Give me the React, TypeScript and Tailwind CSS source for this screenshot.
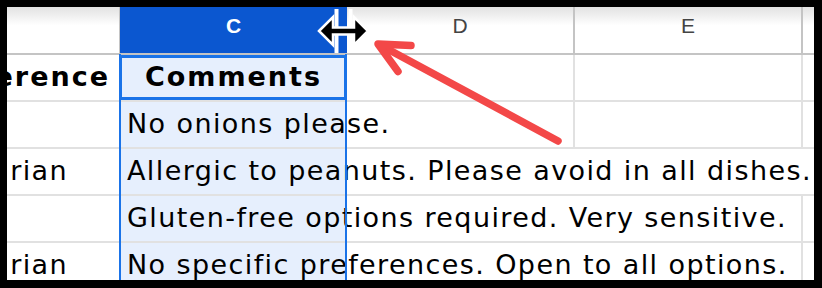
import React from 'react';

type Row = { b: string; c: string; head?: boolean; dLine: boolean; eLine: boolean };

const rows: Row[] = [
  { b: 'Dietary Preference', c: 'Comments', head: true, dLine: true, eLine: true },
  { b: '', c: 'No onions please.', dLine: true, eLine: true },
  { b: 'Vegetarian', c: 'Allergic to peanuts. Please avoid in all dishes.', dLine: false, eLine: false },
  { b: '', c: 'Gluten-free options required. Very sensitive.', dLine: false, eLine: true },
  { b: 'Vegetarian', c: 'No specific preferences. Open to all options.', dLine: false, eLine: true },
];

function BodyRow({ r }: { r: Row }) {
  return (
    <div className="flex h-[47px] shrink-0 border-b-2 border-[#e1e1e1]">
      <div className="flex w-[113px] shrink-0 items-center justify-end overflow-hidden pr-[10px] whitespace-nowrap">
        {r.b && (
          <span
            className={
              r.head
                ? 'font-bold text-[27px] tracking-[2px] text-black'
                : 'text-[27px] tracking-[1.4px] text-black pr-[42px]'
            }
          >
            {r.b}
          </span>
        )}
      </div>
      <div
        className={
          r.head
            ? 'flex w-[227px] shrink-0 items-center justify-center bg-[#e6effd] whitespace-nowrap'
            : 'flex w-[227px] shrink-0 items-center bg-[#e6effd] pl-[7px] whitespace-nowrap overflow-visible'
        }
      >
        <span
          className={
            r.head
              ? 'font-bold text-[27px] tracking-[2px] text-black'
              : 'text-[27px] tracking-[1.4px] text-black'
          }
        >
          {r.c}
        </span>
      </div>
      <div className={r.dLine ? 'w-[228px] shrink-0 border-r-2 border-[#e1e1e1]' : 'w-[228px] shrink-0'} />
      <div className={r.eLine ? 'w-[228px] shrink-0 border-r-2 border-[#e1e1e1]' : 'w-[228px] shrink-0'} />
      <div className="flex-1" />
    </div>
  );
}

export default function App() {
  return (
    <div className="h-[288px] w-[822px] bg-black pt-[7px] pl-[7px] pr-[8px] pb-[8px] font-['DejaVu_Sans',sans-serif]">
      <div className="relative flex h-full w-full flex-col overflow-hidden bg-white">
        {/* column header */}
        <div className="flex h-[48px] shrink-0 border-b-2 border-[#c4c4c4] bg-gradient-to-b from-[#e2e2e2] via-white via-40% to-white font-['Liberation_Sans',Arial,sans-serif] text-[21px]">
          <div className="w-[113px] shrink-0 border-r-[1.5px] border-[#c4c4c4]" />
          <div className="flex w-[227px] shrink-0 items-center justify-center bg-[#0b57d0] pb-[8px] font-bold text-white">
            C
          </div>
          <div className="flex w-[228px] shrink-0 items-center justify-center border-r-2 border-[#c4c4c4] pb-[8px] text-[#444]">
            D
          </div>
          <div className="flex w-[228px] shrink-0 items-center justify-center border-r-2 border-[#c4c4c4] pb-[8px] text-[#444]">
            E
          </div>
          <div className="flex-1" />
        </div>
        {rows.map((r, i) => (
          <BodyRow key={i} r={r} />
        ))}

        {/* column selection outline */}
        <div className="pointer-events-none absolute left-[112px] top-[47px] bottom-0 w-[228px] border-x-2 border-[#1a73e8]" />
        {/* active cell */}
        <div className="pointer-events-none absolute left-[112px] top-[48px] h-[45px] w-[228px] border-[3px] border-[#1a73e8]" />

        {/* resize cursor */}
        <svg className="pointer-events-none absolute left-0 top-0" width="807" height="273" viewBox="0 0 807 273">
          <g transform="translate(-7,-7)">
            <rect x="334.5" y="9" width="4" height="44" fill="#fff" />
            <rect x="348.5" y="9" width="4" height="44" fill="#fff" />
            <polygon
              points="319,31 333,17 333,27.5 354,27.5 354,17 368,31 354,45 354,34.5 333,34.5 333,45"
              fill="#000"
              stroke="#fff"
              strokeWidth="2.5"
              strokeLinejoin="miter"
            />
          </g>
        </svg>

        {/* red arrow */}
        <svg className="pointer-events-none absolute left-0 top-0" width="807" height="273" viewBox="0 0 807 273">
          <g transform="translate(-7,-7)" stroke="#f34848" strokeWidth="7.5" strokeLinecap="round" strokeLinejoin="round" fill="none">
            <line x1="558" y1="141" x2="380" y2="45" />
            <polyline points="411,45.5 378,44 398,71.5" />
          </g>
        </svg>
      </div>
    </div>
  );
}
